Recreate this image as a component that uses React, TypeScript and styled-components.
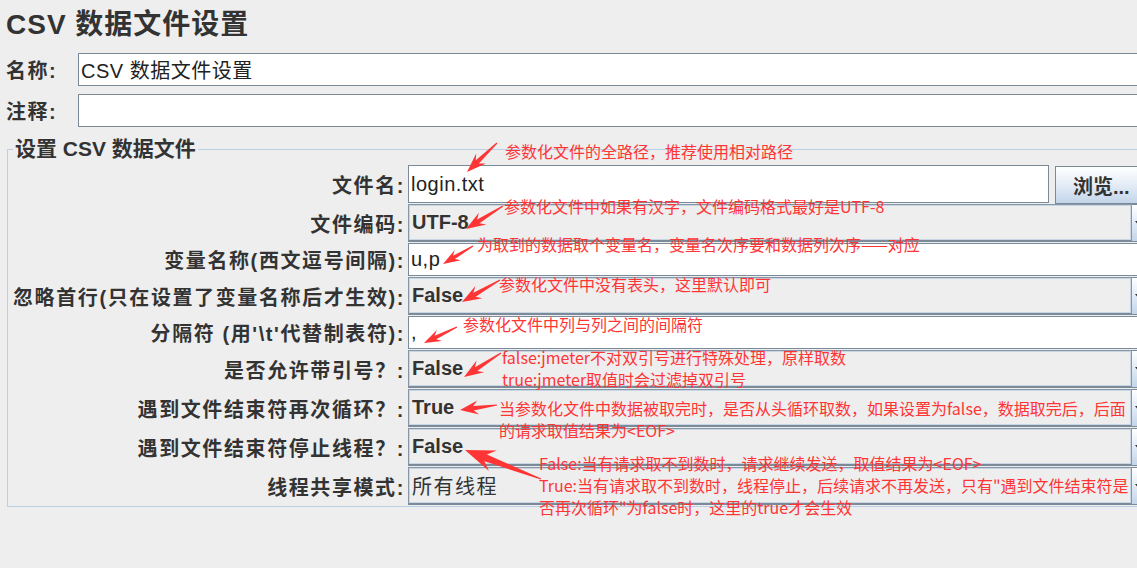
import styled, { createGlobalStyle } from "styled-components";

const GlobalStyle = createGlobalStyle`
  html, body {
    margin: 0;
    padding: 0;
    background: #eeeeee;
    overflow: hidden;
  }
  body {
    font-family: "Liberation Sans", "Noto Sans CJK SC", sans-serif;
    color: #333333;
  }
`;

const Page = styled.div`
  position: relative;
  width: 1180px;
  height: 568px;
  padding-left: 6px;
  box-sizing: border-box;
`;

const Title = styled.h1`
  margin: 0;
  height: 50px;
  line-height: 50px;
  font-size: 28px;
  font-weight: 700;
  letter-spacing: 1px;
  color: #333333;
`;

const TopFields = styled.div`
  display: flex;
  flex-direction: column;
  gap: 8px;
  margin-top: 3px;
`;

const TopRow = styled.div`
  display: grid;
  grid-template-columns: 72px 1fr;
  align-items: center;
`;

const Label = styled.span`
  font-size: 20px;
  font-weight: 700;
  letter-spacing: 1.5px;
  white-space: nowrap;
  color: #333333;
`;

const TextField = styled.div<{ $width?: number; $height?: number }>`
  box-sizing: border-box;
  width: ${(p) => (p.$width ? `${p.$width}px` : "100%")};
  height: ${(p) => p.$height ?? 33}px;
  background: #ffffff;
  border: 1px solid #7a8a99;
  padding: 0 2px;
  display: flex;
  align-items: center;
  font-size: 20px;
  letter-spacing: 0.5px;
  color: #222222;
  white-space: nowrap;
  overflow: hidden;
`;

const Section = styled.fieldset`
  margin: 10px 0 0 1px;
  padding: 4px 0 1px 0;
  border: 1px solid #b8cfe5;
  min-width: 0;
`;

const Legend = styled.legend`
  margin-left: 5px;
  padding: 0 2px;
  font-size: 21px;
  font-weight: 700;
  line-height: 24px;
  color: #333333;
`;

const SettingsGrid = styled.div`
  display: grid;
  grid-template-columns: 397px 1fr;
  column-gap: 3px;
  row-gap: 1px;
  align-items: stretch;
`;

const RowLabel = styled(Label)`
  display: flex;
  align-items: center;
  justify-content: flex-end;
  letter-spacing: 1.6px;
`;

const FileRow = styled.div`
  display: flex;
  gap: 6px;
  height: 38px;
`;

const BrowseButton = styled.button`
  flex: 1;
  height: 38px;
  margin-top: 1px;
  border: 1px solid #7a8a99;
  background: linear-gradient(#ffffff 0%, #e6eef7 45%, #c3d5ea 100%);
  font-family: "Liberation Sans", "Noto Sans CJK SC", sans-serif;
  font-size: 20px;
  font-weight: 700;
  color: #333333;
  text-align: left;
  padding: 0 0 0 17px;
`;

const Combo = styled.div`
  display: flex;
  height: 38px;
`;

const ComboBody = styled.div<{ $bold?: boolean }>`
  flex: 1;
  box-sizing: border-box;
  display: flex;
  align-items: center;
  padding: 0 3px;
  background: #eeeeee;
  border: 1px solid #8796a6;
  border-bottom: 2px solid #7a8a99;
  box-shadow: inset 0 0 0 1px #c8d6e4;
  font-size: 20px;
  font-weight: ${(p) => (p.$bold ? 700 : 400)};
  letter-spacing: ${(p) => (p.$bold ? 0 : 1.5)}px;
  color: #333333;
`;

const ComboArrow = styled.div`
  width: 47px;
  box-sizing: border-box;
  border: 1px solid #7a8a99;
  border-left: none;
  background: linear-gradient(#ffffff, #c3d5ea);
  position: relative;
  &::after {
    content: "";
    position: absolute;
    left: 3px;
    top: 16px;
    border-left: 4px solid transparent;
    border-right: 4px solid transparent;
    border-top: 5px solid #333333;
  }
`;

const Note = styled.div<{ $x: number; $y: number }>`
  position: absolute;
  left: ${(p) => p.$x}px;
  top: ${(p) => p.$y}px;
  font-family: "Noto Sans CJK SC", sans-serif;
  font-size: 16px;
  line-height: 22px;
  color: #ff3535;
  white-space: pre;
  pointer-events: none;
`;

const Overlay = styled.svg`
  position: absolute;
  left: 0;
  top: 0;
  width: 1137px;
  height: 568px;
  pointer-events: none;
`;

type ArrowSpec = { tx: number; ty: number; px: number; py: number; head: number; wide: number };

const arrows: ArrowSpec[] = [
  { tx: 497, ty: 143, px: 467, py: 172, head: 17, wide: 7 },
  { tx: 503, ty: 206, px: 466, py: 229, head: 17, wide: 7 },
  { tx: 473, ty: 246, px: 443, py: 264, head: 15, wide: 6 },
  { tx: 500, ty: 280, px: 462, py: 302, head: 17, wide: 7 },
  { tx: 457, ty: 327, px: 424, py: 343, head: 15, wide: 6 },
  { tx: 501, ty: 353, px: 464, py: 377, head: 17, wide: 7 },
  { tx: 497, ty: 405, px: 460, py: 410, head: 16, wide: 7 },
  { tx: 541, ty: 479, px: 465, py: 450, head: 26, wide: 11 },
];

function arrowPoints(a: ArrowSpec) {
  const dx = a.px - a.tx;
  const dy = a.py - a.ty;
  const len = Math.hypot(dx, dy);
  const ux = dx / len;
  const uy = dy / len;
  const nx = -uy;
  const ny = ux;
  const bx = a.px - ux * a.head;
  const by = a.py - uy * a.head;
  const nb = a.head * 0.15;
  const w1 = a.wide * 0.32;
  const pts = [
    [a.tx + nx * 0.6, a.ty + ny * 0.6],
    [bx + ux * nb + nx * w1, by + uy * nb + ny * w1],
    [bx - ux * nb + nx * a.wide, by - uy * nb + ny * a.wide],
    [a.px, a.py],
    [bx - ux * nb - nx * a.wide, by - uy * nb - ny * a.wide],
    [bx + ux * nb - nx * w1, by + uy * nb - ny * w1],
    [a.tx - nx * 0.6, a.ty - ny * 0.6],
  ];
  return pts.map((p) => `${p[0].toFixed(1)},${p[1].toFixed(1)}`).join(" ");
}

const notes = [
  { x: 505, y: 140, text: "参数化文件的全路径，推荐使用相对路径" },
  { x: 504, y: 195, text: "参数化文件中如果有汉字，文件编码格式最好是UTF-8" },
  { x: 477, y: 233, text: "为取到的数据取个变量名，变量名次序要和数据列次序——对应" },
  { x: 499, y: 273, text: "参数化文件中没有表头，这里默认即可" },
  { x: 463, y: 313, text: "参数化文件中列与列之间的间隔符" },
  { x: 502, y: 346, text: "false:jmeter不对双引号进行特殊处理，原样取数\ntrue:jmeter取值时会过滤掉双引号" },
  { x: 499, y: 397, text: "当参数化文件中数据被取完时，是否从头循环取数，如果设置为false，数据取完后，后面\n的请求取值结果为<EOF>" },
  {
    x: 539,
    y: 452,
    text: 'False:当有请求取不到数时，请求继续发送，取值结果为<EOF>\nTrue:当有请求取不到数时，线程停止，后续请求不再发送，只有"遇到文件结束符是\n否再次循环"为false时，这里的true才会生效',
  },
];

type Row =
  | { label: string; kind: "file"; value: string }
  | { label: string; kind: "text"; value: string }
  | { label: string; kind: "combo"; value: string; bold: boolean };

const rows: Row[] = [
  { label: "文件名:", kind: "file", value: "login.txt" },
  { label: "文件编码:", kind: "combo", value: "UTF-8", bold: true },
  { label: "变量名称(西文逗号间隔):", kind: "text", value: "u,p" },
  { label: "忽略首行(只在设置了变量名称后才生效):", kind: "combo", value: "False", bold: true },
  { label: "分隔符 (用'\\t'代替制表符):", kind: "text", value: "," },
  { label: "是否允许带引号？:", kind: "combo", value: "False", bold: true },
  { label: "遇到文件结束符再次循环？:", kind: "combo", value: "True", bold: true },
  { label: "遇到文件结束符停止线程？:", kind: "combo", value: "False", bold: true },
  { label: "线程共享模式:", kind: "combo", value: "所有线程", bold: false },
];

function renderField(row: Row) {
  if (row.kind === "file") {
    return (
      <FileRow>
        <TextField $width={641} $height={38}>{row.value}</TextField>
        <BrowseButton>浏览...</BrowseButton>
      </FileRow>
    );
  }
  if (row.kind === "text") {
    return <TextField>{row.value}</TextField>;
  }
  return (
    <Combo>
      <ComboBody $bold={row.bold}>{row.value}</ComboBody>
      <ComboArrow />
    </Combo>
  );
}

export default function App() {
  return (
    <Page>
      <GlobalStyle />
      <Title>CSV 数据文件设置</Title>
      <TopFields>
        <TopRow>
          <Label>名称:</Label>
          <TextField>CSV 数据文件设置</TextField>
        </TopRow>
        <TopRow>
          <Label>注释:</Label>
          <TextField />
        </TopRow>
      </TopFields>

      <Section>
        <Legend>设置 CSV 数据文件</Legend>
        <SettingsGrid>
          {rows.map((row) => [
            <RowLabel key={row.label + "-l"}>{row.label}</RowLabel>,
            <div key={row.label + "-f"}>{renderField(row)}</div>,
          ])}
        </SettingsGrid>
      </Section>

      {notes.map((n) => (
        <Note key={n.text} $x={n.x} $y={n.y}>
          {n.text}
        </Note>
      ))}
      <Overlay viewBox="0 0 1137 568">
        {arrows.map((a, i) => (
          <polygon key={i} points={arrowPoints(a)} fill="#ff3535" />
        ))}
      </Overlay>
    </Page>
  );
}
